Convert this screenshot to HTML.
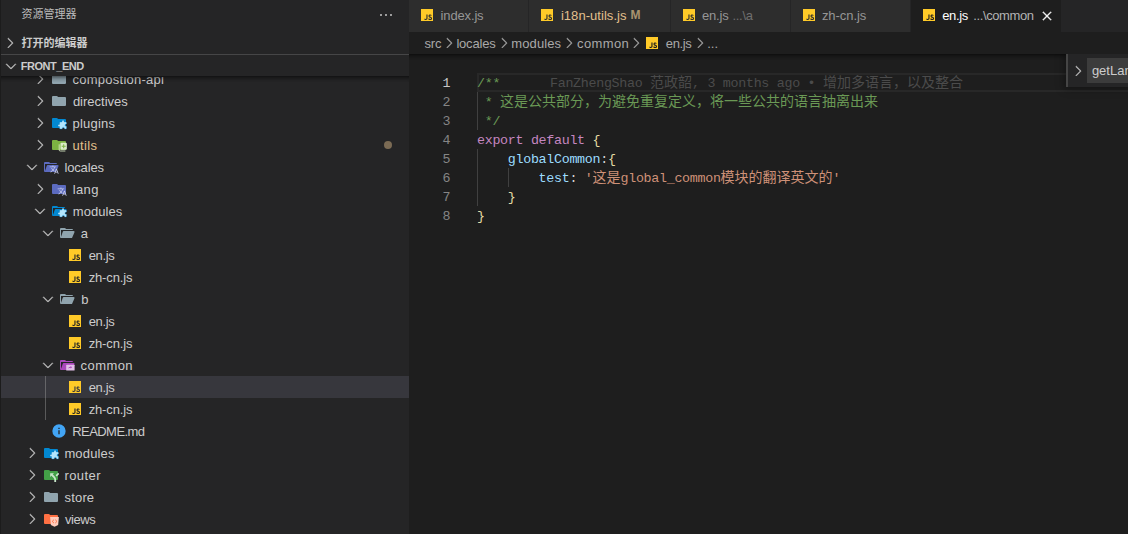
<!DOCTYPE html>
<html lang="zh-CN">
<head>
<meta charset="utf-8">
<title>en.js - front_end - Visual Studio Code</title>
<style>
html,body{margin:0;padding:0;background:#1e1e1e;}
body{width:1128px;height:534px;overflow:hidden;position:relative;font-family:"Liberation Sans",sans-serif;}
.abs{position:absolute;display:block}
.lbl{white-space:pre}
.ui13{font-size:13px}
.ui11b{font-size:11px;font-weight:bold}
svg.ic{display:block}
#sidebar{position:absolute;left:0;top:0;width:409px;height:534px;background:#252526;overflow:hidden}
.edge{position:absolute;left:0;top:0;width:1px;height:534px;background:#1c1c1c;z-index:5}
.sb-title{position:absolute;left:0;top:0;width:409px;height:32px}
.pane-h{position:absolute;left:0;width:409px;height:21px;z-index:3;background:#252526}
.pane-border{position:absolute;left:0;width:409px;height:1px;background:#464647;z-index:3}
#tree{position:absolute;left:0;width:409px;bottom:0;overflow:hidden}
.row{position:absolute;left:0;width:409px;height:22px}
.row.sel{background:#37373d}
.dot{width:8.800px;height:8.800px;border-radius:50%;background:#7b6b54}
.guide{position:absolute;width:1px;background:rgba(170,170,170,.4)}
.tree-shadow{position:absolute;left:0;top:0;width:409px;height:6px;box-shadow:#000 0 6px 6px -6px inset}
#editor{position:absolute;left:409px;top:0;width:719px;height:534px;background:#1e1e1e;overflow:hidden}
#tabs{position:absolute;left:0;top:0;width:719px;height:32px;background:#252526}
.tab{position:absolute;top:0;height:32px;background:#2d2d2d;margin-left:-409px}
.tab.act{background:#1e1e1e}
#crumbs{position:absolute;left:0;top:32px;width:719px;height:22px;background:#1e1e1e}
#edclip{position:absolute;left:0;top:54px;width:719px;height:480px;overflow:hidden}
#code{position:absolute;left:0;top:0;width:719px;height:480px;font-family:"Liberation Mono",monospace;font-size:13.3333px;letter-spacing:-0.300px}
.curline{position:absolute;left:68px;top:19px;width:700px;height:15px;border:2px solid #282828}
.iguide{position:absolute;width:1px;background:#404040}
.ln{position:absolute;left:0;width:41.300px;height:19px;line-height:19px;padding-top:1px;text-align:right;color:#858585;white-space:pre}
.ln.act{color:#c6c6c6}
.cl{position:absolute;left:68px;height:19px;line-height:19px;padding-top:1px;white-space:pre;color:#d4d4d4}
.blame{margin-left:49.900px}
.cjkui{position:absolute;white-space:pre;font-family:"Liberation Sans","Noto Sans CJK SC",sans-serif;font-size:11px;line-height:11px}
.cjkt{font-family:"Liberation Mono","Noto Sans CJK SC",monospace;font-size:14px;letter-spacing:0}
.ed-shadow{position:absolute;left:0;top:0;width:719px;height:6px;box-shadow:#000 0 6px 6px -6px inset}
#find{position:absolute;left:657px;top:0;width:62px;height:33px;background:#252526;box-shadow:0 0 8px 2px rgba(0,0,0,.36)}
#find .sash{position:absolute;left:0;top:0;width:2px;height:33px;background:#454545}
#find .inp{position:absolute;left:21px;top:4px;width:41px;height:25px;background:#3c3c3c;overflow:hidden}
</style>
</head>
<body>
<div id="sidebar">
<div class="edge"></div>
<div class="sb-title"><span class="cjkui" style="left:21.400px;top:9.300px;color:#bbbbbb">资源管理器</span><svg class="abs" style="left:378px;top:7px" width="16" height="16" viewBox="0 0 16 16"><path fill="#c5c5c5" d="M4 8a1 1 0 1 1-2 0 1 1 0 0 1 2 0zm5 0a1 1 0 1 1-2 0 1 1 0 0 1 2 0zm5 0a1 1 0 1 1-2 0 1 1 0 0 1 2 0z"/></svg></div>
<div class="pane-h" style="top:32px"><span class="abs" style="left:2.300px;top:3px"><svg class="ic" width="16" height="16" viewBox="0 0 16 16"><path fill="#c5c5c5" stroke="#c5c5c5" stroke-width=".35" d="M10.072 8.024L5.715 3.667l.618-.62L11 7.716v.618L6.333 13l-.618-.619 4.357-4.357z"/></svg></span><span class="cjkui" style="left:21.400px;top:5.600px;color:#cccccc;font-weight:bold">打开的编辑器</span></div>
<div class="pane-border" style="top:54px"></div>
<div class="pane-h" style="top:55px"><span class="abs" style="left:2.800px;top:3px"><svg class="ic" width="16" height="16" viewBox="0 0 16 16"><path fill="#c5c5c5" stroke="#c5c5c5" stroke-width=".35" d="M7.976 10.072l4.357-4.357.62.618L8.284 11h-.618L3 6.333l.619-.618 4.357 4.357z"/></svg></span><span class="abs lbl ui11b" style="color:#cccccc;top:0;line-height:22px;left:20.7px;letter-spacing:-0.45px">FRONT_END</span></div>
<div id="tree" style="top:76px">
<div class="row" style="top:-8px"><span class="abs" style="left:31.5px;top:3px"><svg class="ic" width="16" height="16" viewBox="0 0 16 16"><path fill="#c5c5c5" stroke="#c5c5c5" stroke-width=".35" d="M10.072 8.024L5.715 3.667l.618-.62L11 7.716v.618L6.333 13l-.618-.619 4.357-4.357z"/></svg></span><span class="abs" style="left:51px;top:3px"><svg class="ic" width="16" height="16" viewBox="0 0 32 32"><path fill="#90a4ae" d="m13.844 7.536-1.288-1.072A2 2 0 0 0 11.276 6H4a2 2 0 0 0-2 2v16a2 2 0 0 0 2 2h24a2 2 0 0 0 2-2V10a2 2 0 0 0-2-2H15.124a2 2 0 0 1-1.28-.464"/></svg></span><span class="abs lbl ui13" style="color:#cccccc;top:1px;line-height:22px;left:72.5px;letter-spacing:0.25px">compostion-api</span></div>
<div class="row" style="top:14px"><span class="abs" style="left:31.5px;top:3px"><svg class="ic" width="16" height="16" viewBox="0 0 16 16"><path fill="#c5c5c5" stroke="#c5c5c5" stroke-width=".35" d="M10.072 8.024L5.715 3.667l.618-.62L11 7.716v.618L6.333 13l-.618-.619 4.357-4.357z"/></svg></span><span class="abs" style="left:51px;top:3px"><svg class="ic" width="16" height="16" viewBox="0 0 32 32"><path fill="#90a4ae" d="m13.844 7.536-1.288-1.072A2 2 0 0 0 11.276 6H4a2 2 0 0 0-2 2v16a2 2 0 0 0 2 2h24a2 2 0 0 0 2-2V10a2 2 0 0 0-2-2H15.124a2 2 0 0 1-1.28-.464"/></svg></span><span class="abs lbl ui13" style="color:#cccccc;top:1px;line-height:22px;left:72.9px;letter-spacing:0px">directives</span></div>
<div class="row" style="top:36px"><span class="abs" style="left:31.5px;top:3px"><svg class="ic" width="16" height="16" viewBox="0 0 16 16"><path fill="#c5c5c5" stroke="#c5c5c5" stroke-width=".35" d="M10.072 8.024L5.715 3.667l.618-.62L11 7.716v.618L6.333 13l-.618-.619 4.357-4.357z"/></svg></span><span class="abs" style="left:51px;top:3px"><svg class="ic" width="16" height="16" viewBox="0 0 32 32"><path fill="#0288d1" d="m13.844 7.536-1.288-1.072A2 2 0 0 0 11.276 6H4a2 2 0 0 0-2 2v16a2 2 0 0 0 2 2h24a2 2 0 0 0 2-2V10a2 2 0 0 0-2-2H15.124a2 2 0 0 1-1.28-.464"/><path fill="#b3e5fc" stroke="#0277bd" stroke-width=".6" transform="matrix(-1.090 0 0 1.090 48.680 -2.480)" d="M30 19.500h-1v-3c0-.83-.67-1.500-1.500-1.500h-3v-1a2 2 0 0 0-4 0v1h-3c-.83 0-1.500.67-1.500 1.500V19h1a2 2 0 0 1 0 4h-1v3.500c0 .83.67 1.500 1.500 1.500H20v-1a2 2 0 0 1 4 0v1h3.500c.83 0 1.500-.67 1.500-1.500v-3h1a2 2 0 0 0 0-4z"/></svg></span><span class="abs lbl ui13" style="color:#cccccc;top:1px;line-height:22px;left:72.6px;letter-spacing:0.2px">plugins</span></div>
<div class="row" style="top:58px"><span class="abs" style="left:31.5px;top:3px"><svg class="ic" width="16" height="16" viewBox="0 0 16 16"><path fill="#c5c5c5" stroke="#c5c5c5" stroke-width=".35" d="M10.072 8.024L5.715 3.667l.618-.62L11 7.716v.618L6.333 13l-.618-.619 4.357-4.357z"/></svg></span><span class="abs" style="left:51px;top:3px"><svg class="ic" width="16" height="16" viewBox="0 0 32 32"><path fill="#7cb342" d="m13.844 7.536-1.288-1.072A2 2 0 0 0 11.276 6H4a2 2 0 0 0-2 2v16a2 2 0 0 0 2 2h24a2 2 0 0 0 2-2V10a2 2 0 0 0-2-2H15.124a2 2 0 0 1-1.28-.464"/><path fill="none" stroke="#dcedc8" stroke-width="1.700" stroke-linecap="round" stroke-linejoin="round" d="M16.400 15.500V26a2 2 0 0 0 2 2H28"/><rect x="19" y="11.300" width="12.700" height="14.400" rx="2.200" fill="#dcedc8"/><path fill="#7cb342" d="M24.400 14.600h2v3h3v2h-3v3h-2v-3h-3v-2h3z"/></svg></span><span class="abs lbl ui13" style="color:#e2c08d;top:1px;line-height:22px;left:72.6px;letter-spacing:0.3px">utils</span><span class="abs dot" style="left:383.600px;top:6.600px"></span></div>
<div class="row" style="top:80px"><span class="abs" style="left:23.8px;top:3px"><svg class="ic" width="16" height="16" viewBox="0 0 16 16"><path fill="#c5c5c5" stroke="#c5c5c5" stroke-width=".35" d="M7.976 10.072l4.357-4.357.62.618L8.284 11h-.618L3 6.333l.619-.618 4.357 4.357z"/></svg></span><span class="abs" style="left:43px;top:3px"><svg class="ic" width="16" height="16" viewBox="0 0 32 32"><path fill="#5c6bc0" d="M28.967 12H9.442a2 2 0 0 0-1.898 1.368L4 24V10h24a2 2 0 0 0-2-2H15.124a2 2 0 0 1-1.28-.464l-1.288-1.072A2 2 0 0 0 11.276 6H4a2 2 0 0 0-2 2v16a2 2 0 0 0 2 2h22l4.805-11.212A2 2 0 0 0 28.967 12"/><g fill="#c5cae9" transform="translate(12.500 11.500) scale(.82)"><path d="M12.870 15.070l-2.540-2.510.03-.03A17.520 17.520 0 0 0 14.070 6H17V4h-7V2H8v2H1v2h11.170C11.500 7.920 10.440 9.750 9 11.350 8.070 10.320 7.300 9.190 6.690 8h-2c.73 1.630 1.730 3.170 2.980 4.560l-5.090 5.020L4 19l5-5 3.110 3.110.76-2.040M18.500 10h-2L12 22h2l1.120-3h4.750L21 22h2l-4.500-12m-2.620 7l1.620-4.330L19.120 17h-3.240z"/></g></svg></span><span class="abs lbl ui13" style="color:#cccccc;top:1px;line-height:22px;left:64.4px;letter-spacing:-0.15px">locales</span></div>
<div class="row" style="top:102px"><span class="abs" style="left:31.5px;top:3px"><svg class="ic" width="16" height="16" viewBox="0 0 16 16"><path fill="#c5c5c5" stroke="#c5c5c5" stroke-width=".35" d="M10.072 8.024L5.715 3.667l.618-.62L11 7.716v.618L6.333 13l-.618-.619 4.357-4.357z"/></svg></span><span class="abs" style="left:51px;top:3px"><svg class="ic" width="16" height="16" viewBox="0 0 32 32"><path fill="#5c6bc0" d="m13.844 7.536-1.288-1.072A2 2 0 0 0 11.276 6H4a2 2 0 0 0-2 2v16a2 2 0 0 0 2 2h24a2 2 0 0 0 2-2V10a2 2 0 0 0-2-2H15.124a2 2 0 0 1-1.28-.464"/><g fill="#c5cae9" transform="translate(12.500 11.500) scale(.82)"><path d="M12.870 15.070l-2.540-2.510.03-.03A17.520 17.520 0 0 0 14.070 6H17V4h-7V2H8v2H1v2h11.170C11.500 7.920 10.440 9.750 9 11.350 8.070 10.320 7.300 9.190 6.690 8h-2c.73 1.630 1.730 3.170 2.980 4.560l-5.090 5.020L4 19l5-5 3.110 3.110.76-2.040M18.500 10h-2L12 22h2l1.120-3h4.750L21 22h2l-4.500-12m-2.620 7l1.620-4.330L19.120 17h-3.240z"/></g></svg></span><span class="abs lbl ui13" style="color:#cccccc;top:1px;line-height:22px;left:72.8px;letter-spacing:0.35px">lang</span></div>
<div class="row" style="top:124px"><span class="abs" style="left:31.8px;top:3px"><svg class="ic" width="16" height="16" viewBox="0 0 16 16"><path fill="#c5c5c5" stroke="#c5c5c5" stroke-width=".35" d="M7.976 10.072l4.357-4.357.62.618L8.284 11h-.618L3 6.333l.619-.618 4.357 4.357z"/></svg></span><span class="abs" style="left:51px;top:3px"><svg class="ic" width="16" height="16" viewBox="0 0 32 32"><path fill="#0288d1" d="M28.967 12H9.442a2 2 0 0 0-1.898 1.368L4 24V10h24a2 2 0 0 0-2-2H15.124a2 2 0 0 1-1.28-.464l-1.288-1.072A2 2 0 0 0 11.276 6H4a2 2 0 0 0-2 2v16a2 2 0 0 0 2 2h22l4.805-11.212A2 2 0 0 0 28.967 12"/><path fill="#b3e5fc" stroke="#0277bd" stroke-width=".6" transform="matrix(-1.090 0 0 1.090 48.680 -2.480)" d="M30 19.500h-1v-3c0-.83-.67-1.500-1.500-1.500h-3v-1a2 2 0 0 0-4 0v1h-3c-.83 0-1.500.67-1.500 1.500V19h1a2 2 0 0 1 0 4h-1v3.500c0 .83.67 1.500 1.500 1.500H20v-1a2 2 0 0 1 4 0v1h3.500c.83 0 1.500-.67 1.500-1.500v-3h1a2 2 0 0 0 0-4z"/></svg></span><span class="abs lbl ui13" style="color:#cccccc;top:1px;line-height:22px;left:72.8px;letter-spacing:0.05px">modules</span></div>
<div class="row" style="top:146px"><span class="abs" style="left:39.8px;top:3px"><svg class="ic" width="16" height="16" viewBox="0 0 16 16"><path fill="#c5c5c5" stroke="#c5c5c5" stroke-width=".35" d="M7.976 10.072l4.357-4.357.62.618L8.284 11h-.618L3 6.333l.619-.618 4.357 4.357z"/></svg></span><span class="abs" style="left:59px;top:3px"><svg class="ic" width="16" height="16" viewBox="0 0 32 32"><path fill="#90a4ae" d="M28.967 12H9.442a2 2 0 0 0-1.898 1.368L4 24V10h24a2 2 0 0 0-2-2H15.124a2 2 0 0 1-1.28-.464l-1.288-1.072A2 2 0 0 0 11.276 6H4a2 2 0 0 0-2 2v16a2 2 0 0 0 2 2h22l4.805-11.212A2 2 0 0 0 28.967 12"/></svg></span><span class="abs lbl ui13" style="color:#cccccc;top:1px;line-height:22px;left:80.8px;letter-spacing:0px">a</span></div>
<div class="row" style="top:168px"><span class="abs" style="left:67px;top:3px"><svg class="ic" width="16" height="16" viewBox="0 0 24 24"><path fill="#ffca28" d="M3 3h18v18H3V3m4.73 15.04c.4.85 1.19 1.55 2.54 1.55 1.5 0 2.53-.8 2.53-2.55v-5.78h-1.7V17c0 .86-.35 1.08-.9 1.08-.58 0-.82-.4-1.09-.87l-1.38.83m5.98-.18c.5.98 1.51 1.73 3.09 1.73 1.6 0 2.8-.83 2.8-2.36 0-1.41-.81-2.04-2.25-2.66l-.42-.18c-.73-.31-1.04-.52-1.04-1.02 0-.41.31-.73.81-.73.48 0 .8.21 1.09.73l1.31-.87c-.55-.96-1.33-1.33-2.4-1.33-1.51 0-2.48.96-2.48 2.23 0 1.38.81 2.03 2.03 2.55l.42.18c.78.34 1.24.55 1.24 1.13 0 .48-.45.83-1.15.83-.83 0-1.31-.43-1.67-1.03l-1.38.8z"/></svg></span><span class="abs lbl ui13" style="color:#cccccc;top:1px;line-height:22px;left:88.7px;letter-spacing:-0.35px">en.js</span></div>
<div class="row" style="top:190px"><span class="abs" style="left:67px;top:3px"><svg class="ic" width="16" height="16" viewBox="0 0 24 24"><path fill="#ffca28" d="M3 3h18v18H3V3m4.73 15.04c.4.85 1.19 1.55 2.54 1.55 1.5 0 2.53-.8 2.53-2.55v-5.78h-1.7V17c0 .86-.35 1.08-.9 1.08-.58 0-.82-.4-1.09-.87l-1.38.83m5.98-.18c.5.98 1.51 1.73 3.09 1.73 1.6 0 2.8-.83 2.8-2.36 0-1.41-.81-2.04-2.25-2.66l-.42-.18c-.73-.31-1.04-.52-1.04-1.02 0-.41.31-.73.81-.73.48 0 .8.21 1.09.73l1.31-.87c-.55-.96-1.33-1.33-2.4-1.33-1.51 0-2.48.96-2.48 2.23 0 1.38.81 2.03 2.03 2.55l.42.18c.78.34 1.24.55 1.24 1.13 0 .48-.45.83-1.15.83-.83 0-1.31-.43-1.67-1.03l-1.38.8z"/></svg></span><span class="abs lbl ui13" style="color:#cccccc;top:1px;line-height:22px;left:88.7px;letter-spacing:-0.15px">zh-cn.js</span></div>
<div class="row" style="top:212px"><span class="abs" style="left:39.8px;top:3px"><svg class="ic" width="16" height="16" viewBox="0 0 16 16"><path fill="#c5c5c5" stroke="#c5c5c5" stroke-width=".35" d="M7.976 10.072l4.357-4.357.62.618L8.284 11h-.618L3 6.333l.619-.618 4.357 4.357z"/></svg></span><span class="abs" style="left:59px;top:3px"><svg class="ic" width="16" height="16" viewBox="0 0 32 32"><path fill="#90a4ae" d="M28.967 12H9.442a2 2 0 0 0-1.898 1.368L4 24V10h24a2 2 0 0 0-2-2H15.124a2 2 0 0 1-1.28-.464l-1.288-1.072A2 2 0 0 0 11.276 6H4a2 2 0 0 0-2 2v16a2 2 0 0 0 2 2h22l4.805-11.212A2 2 0 0 0 28.967 12"/></svg></span><span class="abs lbl ui13" style="color:#cccccc;top:1px;line-height:22px;left:81.2px;letter-spacing:0px">b</span></div>
<div class="row" style="top:234px"><span class="abs" style="left:67px;top:3px"><svg class="ic" width="16" height="16" viewBox="0 0 24 24"><path fill="#ffca28" d="M3 3h18v18H3V3m4.73 15.04c.4.85 1.19 1.55 2.54 1.55 1.5 0 2.53-.8 2.53-2.55v-5.78h-1.7V17c0 .86-.35 1.08-.9 1.08-.58 0-.82-.4-1.09-.87l-1.38.83m5.98-.18c.5.98 1.51 1.73 3.09 1.73 1.6 0 2.8-.83 2.8-2.36 0-1.41-.81-2.04-2.25-2.66l-.42-.18c-.73-.31-1.04-.52-1.04-1.02 0-.41.31-.73.81-.73.48 0 .8.21 1.09.73l1.31-.87c-.55-.96-1.33-1.33-2.4-1.33-1.51 0-2.48.96-2.48 2.23 0 1.38.81 2.03 2.03 2.55l.42.18c.78.34 1.24.55 1.24 1.13 0 .48-.45.83-1.15.83-.83 0-1.31-.43-1.67-1.03l-1.38.8z"/></svg></span><span class="abs lbl ui13" style="color:#cccccc;top:1px;line-height:22px;left:88.7px;letter-spacing:-0.35px">en.js</span></div>
<div class="row" style="top:256px"><span class="abs" style="left:67px;top:3px"><svg class="ic" width="16" height="16" viewBox="0 0 24 24"><path fill="#ffca28" d="M3 3h18v18H3V3m4.73 15.04c.4.85 1.19 1.55 2.54 1.55 1.5 0 2.53-.8 2.53-2.55v-5.78h-1.7V17c0 .86-.35 1.08-.9 1.08-.58 0-.82-.4-1.09-.87l-1.38.83m5.98-.18c.5.98 1.51 1.73 3.09 1.73 1.6 0 2.8-.83 2.8-2.36 0-1.41-.81-2.04-2.25-2.66l-.42-.18c-.73-.31-1.04-.52-1.04-1.02 0-.41.31-.73.81-.73.48 0 .8.21 1.09.73l1.31-.87c-.55-.96-1.33-1.33-2.4-1.33-1.51 0-2.48.96-2.48 2.23 0 1.38.81 2.03 2.03 2.55l.42.18c.78.34 1.24.55 1.24 1.13 0 .48-.45.83-1.15.83-.83 0-1.31-.43-1.67-1.03l-1.38.8z"/></svg></span><span class="abs lbl ui13" style="color:#cccccc;top:1px;line-height:22px;left:88.7px;letter-spacing:-0.15px">zh-cn.js</span></div>
<div class="row" style="top:278px"><span class="abs" style="left:39.8px;top:3px"><svg class="ic" width="16" height="16" viewBox="0 0 16 16"><path fill="#c5c5c5" stroke="#c5c5c5" stroke-width=".35" d="M7.976 10.072l4.357-4.357.62.618L8.284 11h-.618L3 6.333l.619-.618 4.357 4.357z"/></svg></span><span class="abs" style="left:59px;top:3px"><svg class="ic" width="16" height="16" viewBox="0 0 32 32"><path fill="#ab47bc" d="M28.967 12H9.442a2 2 0 0 0-1.898 1.368L4 24V10h24a2 2 0 0 0-2-2H15.124a2 2 0 0 1-1.28-.464l-1.288-1.072A2 2 0 0 0 11.276 6H4a2 2 0 0 0-2 2v16a2 2 0 0 0 2 2h22l4.805-11.212A2 2 0 0 0 28.967 12"/><rect x="14.400" y="15.400" width="16.800" height="11.800" rx="1.200" fill="#e1bee7"/><path fill="#ab47bc" d="M23.200 18.200l3 2.300-3 2.300v-1.500c-2.200 0-3.600.5-4.700 1.700.4-2.100 1.700-3.400 4.700-3.700z"/></svg></span><span class="abs lbl ui13" style="color:#cccccc;top:1px;line-height:22px;left:80.5px;letter-spacing:0.45px">common</span></div>
<div class="row sel" style="top:300px"><span class="abs" style="left:67px;top:3px"><svg class="ic" width="16" height="16" viewBox="0 0 24 24"><path fill="#ffca28" d="M3 3h18v18H3V3m4.73 15.04c.4.85 1.19 1.55 2.54 1.55 1.5 0 2.53-.8 2.53-2.55v-5.78h-1.7V17c0 .86-.35 1.08-.9 1.08-.58 0-.82-.4-1.09-.87l-1.38.83m5.98-.18c.5.98 1.51 1.73 3.09 1.73 1.6 0 2.8-.83 2.8-2.36 0-1.41-.81-2.04-2.25-2.66l-.42-.18c-.73-.31-1.04-.52-1.04-1.02 0-.41.31-.73.81-.73.48 0 .8.21 1.09.73l1.31-.87c-.55-.96-1.33-1.33-2.4-1.33-1.51 0-2.48.96-2.48 2.23 0 1.38.81 2.03 2.03 2.55l.42.18c.78.34 1.24.55 1.24 1.13 0 .48-.45.83-1.15.83-.83 0-1.31-.43-1.67-1.03l-1.38.8z"/></svg></span><span class="abs lbl ui13" style="color:#cccccc;top:1px;line-height:22px;left:88.7px;letter-spacing:-0.35px">en.js</span></div>
<div class="row" style="top:322px"><span class="abs" style="left:67px;top:3px"><svg class="ic" width="16" height="16" viewBox="0 0 24 24"><path fill="#ffca28" d="M3 3h18v18H3V3m4.73 15.04c.4.85 1.19 1.55 2.54 1.55 1.5 0 2.53-.8 2.53-2.55v-5.78h-1.7V17c0 .86-.35 1.08-.9 1.08-.58 0-.82-.4-1.09-.87l-1.38.83m5.98-.18c.5.98 1.51 1.73 3.09 1.73 1.6 0 2.8-.83 2.8-2.36 0-1.41-.81-2.04-2.25-2.66l-.42-.18c-.73-.31-1.04-.52-1.04-1.02 0-.41.31-.73.81-.73.48 0 .8.21 1.09.73l1.31-.87c-.55-.96-1.33-1.33-2.4-1.33-1.51 0-2.48.96-2.48 2.23 0 1.38.81 2.03 2.03 2.55l.42.18c.78.34 1.24.55 1.24 1.13 0 .48-.45.83-1.15.83-.83 0-1.31-.43-1.67-1.03l-1.38.8z"/></svg></span><span class="abs lbl ui13" style="color:#cccccc;top:1px;line-height:22px;left:88.7px;letter-spacing:-0.15px">zh-cn.js</span></div>
<div class="row" style="top:344px"><span class="abs" style="left:51px;top:3px"><svg class="ic" width="16" height="16" viewBox="0 0 24 24"><path fill="#42a5f5" d="M13 9h-2V7h2m0 10h-2v-6h2m-1-9A10 10 0 0 0 2 12a10 10 0 0 0 10 10 10 10 0 0 0 10-10A10 10 0 0 0 12 2z"/></svg></span><span class="abs lbl ui13" style="color:#cccccc;top:1px;line-height:22px;left:72.2px;letter-spacing:-0.55px">README.md</span></div>
<div class="row" style="top:366px"><span class="abs" style="left:23.5px;top:3px"><svg class="ic" width="16" height="16" viewBox="0 0 16 16"><path fill="#c5c5c5" stroke="#c5c5c5" stroke-width=".35" d="M10.072 8.024L5.715 3.667l.618-.62L11 7.716v.618L6.333 13l-.618-.619 4.357-4.357z"/></svg></span><span class="abs" style="left:43px;top:3px"><svg class="ic" width="16" height="16" viewBox="0 0 32 32"><path fill="#0288d1" d="m13.844 7.536-1.288-1.072A2 2 0 0 0 11.276 6H4a2 2 0 0 0-2 2v16a2 2 0 0 0 2 2h24a2 2 0 0 0 2-2V10a2 2 0 0 0-2-2H15.124a2 2 0 0 1-1.28-.464"/><path fill="#b3e5fc" stroke="#0277bd" stroke-width=".6" transform="matrix(-1.090 0 0 1.090 48.680 -2.480)" d="M30 19.500h-1v-3c0-.83-.67-1.500-1.500-1.500h-3v-1a2 2 0 0 0-4 0v1h-3c-.83 0-1.500.67-1.500 1.500V19h1a2 2 0 0 1 0 4h-1v3.500c0 .83.67 1.500 1.500 1.500H20v-1a2 2 0 0 1 4 0v1h3.500c.83 0 1.500-.67 1.500-1.500v-3h1a2 2 0 0 0 0-4z"/></svg></span><span class="abs lbl ui13" style="color:#cccccc;top:1px;line-height:22px;left:64.4px;letter-spacing:0.15px">modules</span></div>
<div class="row" style="top:388px"><span class="abs" style="left:23.5px;top:3px"><svg class="ic" width="16" height="16" viewBox="0 0 16 16"><path fill="#c5c5c5" stroke="#c5c5c5" stroke-width=".35" d="M10.072 8.024L5.715 3.667l.618-.62L11 7.716v.618L6.333 13l-.618-.619 4.357-4.357z"/></svg></span><span class="abs" style="left:43px;top:3px"><svg class="ic" width="16" height="16" viewBox="0 0 32 32"><path fill="#43a047" d="m13.844 7.536-1.288-1.072A2 2 0 0 0 11.276 6H4a2 2 0 0 0-2 2v16a2 2 0 0 0 2 2h24a2 2 0 0 0 2-2V10a2 2 0 0 0-2-2H15.124a2 2 0 0 1-1.28-.464"/><path fill="#c8e6c9" d="M14.400 12.400h7.600l-7.600 7.600z"/><path fill="none" stroke="#c8e6c9" stroke-width="3.600" d="M17.500 15.500l4.700 4.700q2.200 2.200 2.200 5v4.600"/><path fill="none" stroke="#c8e6c9" stroke-width="3.400" stroke-linecap="round" d="M27.400 16.800l2.900-2.900"/></svg></span><span class="abs lbl ui13" style="color:#cccccc;top:1px;line-height:22px;left:64.4px;letter-spacing:0.45px">router</span></div>
<div class="row" style="top:410px"><span class="abs" style="left:23.5px;top:3px"><svg class="ic" width="16" height="16" viewBox="0 0 16 16"><path fill="#c5c5c5" stroke="#c5c5c5" stroke-width=".35" d="M10.072 8.024L5.715 3.667l.618-.62L11 7.716v.618L6.333 13l-.618-.619 4.357-4.357z"/></svg></span><span class="abs" style="left:43px;top:3px"><svg class="ic" width="16" height="16" viewBox="0 0 32 32"><path fill="#90a4ae" d="m13.844 7.536-1.288-1.072A2 2 0 0 0 11.276 6H4a2 2 0 0 0-2 2v16a2 2 0 0 0 2 2h24a2 2 0 0 0 2-2V10a2 2 0 0 0-2-2H15.124a2 2 0 0 1-1.28-.464"/></svg></span><span class="abs lbl ui13" style="color:#cccccc;top:1px;line-height:22px;left:64.6px;letter-spacing:0.15px">store</span></div>
<div class="row" style="top:432px"><span class="abs" style="left:23.5px;top:3px"><svg class="ic" width="16" height="16" viewBox="0 0 16 16"><path fill="#c5c5c5" stroke="#c5c5c5" stroke-width=".35" d="M10.072 8.024L5.715 3.667l.618-.62L11 7.716v.618L6.333 13l-.618-.619 4.357-4.357z"/></svg></span><span class="abs" style="left:43px;top:3px"><svg class="ic" width="16" height="16" viewBox="0 0 32 32"><path fill="#ff7043" d="m13.844 7.536-1.288-1.072A2 2 0 0 0 11.276 6H4a2 2 0 0 0-2 2v16a2 2 0 0 0 2 2h24a2 2 0 0 0 2-2V10a2 2 0 0 0-2-2H15.124a2 2 0 0 1-1.28-.464"/><path fill="#ffccbc" d="M14.200 11.800h17.600l-1.500 16-7.300 3.600-7.300-3.600z"/><path fill="none" stroke="#ff7043" stroke-width="1.900" d="M21.900 17.500l-3.500 3.300 3.500 3.300M24.500 17.500l3.500 3.300-3.500 3.300"/></svg></span><span class="abs lbl ui13" style="color:#cccccc;top:1px;line-height:22px;left:64.9px;letter-spacing:-0.4px">views</span></div>
<div class="guide" style="left:45px;top:300px;height:44px"></div>
<div class="tree-shadow"></div>
</div>
</div>
<div id="editor">
<div id="tabs">
<div class="tab" style="left:409px;width:119px"><span class="abs" style="left:10px;top:7px"><svg class="ic" width="16" height="16" viewBox="0 0 24 24"><path fill="#ffca28" d="M3 3h18v18H3V3m4.73 15.04c.4.85 1.19 1.55 2.54 1.55 1.5 0 2.53-.8 2.53-2.55v-5.78h-1.7V17c0 .86-.35 1.08-.9 1.08-.58 0-.82-.4-1.09-.87l-1.38.83m5.98-.18c.5.98 1.51 1.73 3.09 1.73 1.6 0 2.8-.83 2.8-2.36 0-1.41-.81-2.04-2.25-2.66l-.42-.18c-.73-.31-1.04-.52-1.04-1.02 0-.41.31-.73.81-.73.48 0 .8.21 1.09.73l1.31-.87c-.55-.96-1.33-1.33-2.4-1.33-1.51 0-2.48.96-2.48 2.23 0 1.38.81 2.03 2.03 2.55l.42.18c.78.34 1.24.55 1.24 1.13 0 .48-.45.83-1.15.83-.83 0-1.31-.43-1.67-1.03l-1.38.8z"/></svg></span><span class="abs lbl ui13" style="color:#969696;top:0px;line-height:32px;left:31.6px;letter-spacing:-0.15px">index.js</span></div>
<div class="tab" style="left:529px;width:141px"><span class="abs" style="left:10px;top:7px"><svg class="ic" width="16" height="16" viewBox="0 0 24 24"><path fill="#ffca28" d="M3 3h18v18H3V3m4.73 15.04c.4.85 1.19 1.55 2.54 1.55 1.5 0 2.53-.8 2.53-2.55v-5.78h-1.7V17c0 .86-.35 1.08-.9 1.08-.58 0-.82-.4-1.09-.87l-1.38.83m5.98-.18c.5.98 1.51 1.73 3.09 1.73 1.6 0 2.8-.83 2.8-2.36 0-1.41-.81-2.04-2.25-2.66l-.42-.18c-.73-.31-1.04-.52-1.04-1.02 0-.41.31-.73.81-.73.48 0 .8.21 1.09.73l1.31-.87c-.55-.96-1.33-1.33-2.4-1.33-1.51 0-2.48.96-2.48 2.23 0 1.38.81 2.03 2.03 2.55l.42.18c.78.34 1.24.55 1.24 1.13 0 .48-.45.83-1.15.83-.83 0-1.31-.43-1.67-1.03l-1.38.8z"/></svg></span><span class="abs lbl ui13" style="color:#e2c08d;top:0px;line-height:32px;left:31.9px;letter-spacing:0.05px">i18n-utils.js</span><span class="abs lbl ui13" style="color:#a8936f;top:-1.4px;line-height:32px;font-size:12px;font-weight:bold;left:101.5px;letter-spacing:0px">M</span></div>
<div class="tab" style="left:671px;width:119px"><span class="abs" style="left:10px;top:7px"><svg class="ic" width="16" height="16" viewBox="0 0 24 24"><path fill="#ffca28" d="M3 3h18v18H3V3m4.73 15.04c.4.85 1.19 1.55 2.54 1.55 1.5 0 2.53-.8 2.53-2.55v-5.78h-1.7V17c0 .86-.35 1.08-.9 1.08-.58 0-.82-.4-1.09-.87l-1.38.83m5.98-.18c.5.98 1.51 1.73 3.09 1.73 1.6 0 2.8-.83 2.8-2.36 0-1.41-.81-2.04-2.25-2.66l-.42-.18c-.73-.31-1.04-.52-1.04-1.02 0-.41.31-.73.81-.73.48 0 .8.21 1.09.73l1.31-.87c-.55-.96-1.33-1.33-2.4-1.33-1.51 0-2.48.96-2.48 2.23 0 1.38.81 2.03 2.03 2.55l.42.18c.78.34 1.24.55 1.24 1.13 0 .48-.45.83-1.15.83-.83 0-1.31-.43-1.67-1.03l-1.38.8z"/></svg></span><span class="abs lbl ui13" style="color:#969696;top:0px;line-height:32px;left:31px;letter-spacing:-0.2px">en.js</span><span class="abs lbl ui13" style="color:#6f6f6f;top:0px;line-height:32px;left:61.4px;letter-spacing:-0.25px">...\a</span></div>
<div class="tab" style="left:791px;width:119px"><span class="abs" style="left:10px;top:7px"><svg class="ic" width="16" height="16" viewBox="0 0 24 24"><path fill="#ffca28" d="M3 3h18v18H3V3m4.73 15.04c.4.85 1.19 1.55 2.54 1.55 1.5 0 2.53-.8 2.53-2.55v-5.78h-1.7V17c0 .86-.35 1.08-.9 1.08-.58 0-.82-.4-1.09-.87l-1.38.83m5.98-.18c.5.98 1.51 1.73 3.09 1.73 1.6 0 2.8-.83 2.8-2.36 0-1.41-.81-2.04-2.25-2.66l-.42-.18c-.73-.31-1.04-.52-1.04-1.02 0-.41.31-.73.81-.73.48 0 .8.21 1.09.73l1.31-.87c-.55-.96-1.33-1.33-2.4-1.33-1.51 0-2.48.96-2.48 2.23 0 1.38.81 2.03 2.03 2.55l.42.18c.78.34 1.24.55 1.24 1.13 0 .48-.45.83-1.15.83-.83 0-1.31-.43-1.67-1.03l-1.38.8z"/></svg></span><span class="abs lbl ui13" style="color:#969696;top:0px;line-height:32px;left:30.9px;letter-spacing:-0.05px">zh-cn.js</span></div>
<div class="tab act" style="left:911px;width:150px"><span class="abs" style="left:10px;top:7px"><svg class="ic" width="16" height="16" viewBox="0 0 24 24"><path fill="#ffca28" d="M3 3h18v18H3V3m4.73 15.04c.4.85 1.19 1.55 2.54 1.55 1.5 0 2.53-.8 2.53-2.55v-5.78h-1.7V17c0 .86-.35 1.08-.9 1.08-.58 0-.82-.4-1.09-.87l-1.38.83m5.98-.18c.5.98 1.51 1.73 3.09 1.73 1.6 0 2.8-.83 2.8-2.36 0-1.41-.81-2.04-2.25-2.66l-.42-.18c-.73-.31-1.04-.52-1.04-1.02 0-.41.31-.73.81-.73.48 0 .8.21 1.09.73l1.31-.87c-.55-.96-1.33-1.33-2.4-1.33-1.51 0-2.48.96-2.48 2.23 0 1.38.81 2.03 2.03 2.55l.42.18c.78.34 1.24.55 1.24 1.13 0 .48-.45.83-1.15.83-.83 0-1.31-.43-1.67-1.03l-1.38.8z"/></svg></span><span class="abs lbl ui13" style="color:#ffffff;top:0px;line-height:32px;left:31.2px;letter-spacing:-0.35px">en.js</span><span class="abs lbl ui13" style="color:#b3b3b3;top:0px;line-height:32px;left:62.3px;letter-spacing:-0.4px">...\common</span><svg class="abs" style="left:127.9px;top:7.700px" width="16" height="16" viewBox="0 0 16 16"><path fill="#ffffff" stroke="#ffffff" stroke-width=".4" d="M8 8.707l3.646 3.647.708-.707L8.707 8l3.647-3.646-.707-.708L8 7.293 4.354 3.646l-.707.708L7.293 8l-3.646 3.646.707.708L8 8.707z"/></svg></div>
</div>
<div id="crumbs">
<span class="abs lbl ui13" style="color:#a9a9a9;top:1px;line-height:22px;left:15.4px;letter-spacing:-0.1px">src</span><span class="abs" style="left:32px;top:3px"><svg class="ic" width="16" height="16" viewBox="0 0 16 16"><path fill="#a9a9a9" stroke="#a9a9a9" stroke-width=".35" d="M10.072 8.024L5.715 3.667l.618-.62L11 7.716v.618L6.333 13l-.618-.619 4.357-4.357z"/></svg></span>
<span class="abs lbl ui13" style="color:#a9a9a9;top:1px;line-height:22px;left:47.4px;letter-spacing:-0.2px">locales</span><span class="abs" style="left:86.7px;top:3px"><svg class="ic" width="16" height="16" viewBox="0 0 16 16"><path fill="#a9a9a9" stroke="#a9a9a9" stroke-width=".35" d="M10.072 8.024L5.715 3.667l.618-.62L11 7.716v.618L6.333 13l-.618-.619 4.357-4.357z"/></svg></span>
<span class="abs lbl ui13" style="color:#a9a9a9;top:1px;line-height:22px;left:102.3px;letter-spacing:0.1px">modules</span><span class="abs" style="left:151.9px;top:3px"><svg class="ic" width="16" height="16" viewBox="0 0 16 16"><path fill="#a9a9a9" stroke="#a9a9a9" stroke-width=".35" d="M10.072 8.024L5.715 3.667l.618-.62L11 7.716v.618L6.333 13l-.618-.619 4.357-4.357z"/></svg></span>
<span class="abs lbl ui13" style="color:#a9a9a9;top:1px;line-height:22px;left:168.1px;letter-spacing:0.35px">common</span><span class="abs" style="left:219.3px;top:3px"><svg class="ic" width="16" height="16" viewBox="0 0 16 16"><path fill="#a9a9a9" stroke="#a9a9a9" stroke-width=".35" d="M10.072 8.024L5.715 3.667l.618-.62L11 7.716v.618L6.333 13l-.618-.619 4.357-4.357z"/></svg></span>
<span class="abs" style="left:235.2px;top:3px"><svg class="ic" width="16" height="16" viewBox="0 0 24 24"><path fill="#ffca28" d="M3 3h18v18H3V3m4.73 15.04c.4.85 1.19 1.55 2.54 1.55 1.5 0 2.53-.8 2.53-2.55v-5.78h-1.7V17c0 .86-.35 1.08-.9 1.08-.58 0-.82-.4-1.09-.87l-1.38.83m5.98-.18c.5.98 1.51 1.73 3.09 1.73 1.6 0 2.8-.83 2.8-2.36 0-1.41-.81-2.04-2.25-2.66l-.42-.18c-.73-.31-1.04-.52-1.04-1.02 0-.41.31-.73.81-.73.48 0 .8.21 1.09.73l1.31-.87c-.55-.96-1.33-1.33-2.4-1.33-1.51 0-2.48.96-2.48 2.23 0 1.38.81 2.03 2.03 2.55l.42.18c.78.34 1.24.55 1.24 1.13 0 .48-.45.83-1.15.83-.83 0-1.31-.43-1.67-1.03l-1.38.8z"/></svg></span>
<span class="abs lbl ui13" style="color:#a9a9a9;top:1px;line-height:22px;left:256.8px;letter-spacing:-0.35px">en.js</span><span class="abs" style="left:282.6px;top:3px"><svg class="ic" width="16" height="16" viewBox="0 0 16 16"><path fill="#a9a9a9" stroke="#a9a9a9" stroke-width=".35" d="M10.072 8.024L5.715 3.667l.618-.62L11 7.716v.618L6.333 13l-.618-.619 4.357-4.357z"/></svg></span>
<span class="abs lbl ui13" style="color:#a9a9a9;top:1px;line-height:22px;left:298.2px;letter-spacing:0.05px">...</span>
</div>
<div id="edclip">
<div id="code">
<div class="curline"></div>
<div class="iguide" style="left:68px;top:38px;height:38px"></div>
<div class="iguide" style="left:68px;top:95px;height:57px"></div>
<div class="iguide" style="left:99px;top:114px;height:19px"></div>
<div class="ln act" style="top:19px">1</div>
<div class="cl" style="top:19px"><span style="color:#6a9955">/**</span><span class="blame"><span style="color:#4b4b4b">FanZhengShao </span><span class="cjkt" style="color:#4b4b4b">范政韶</span><span style="color:#4b4b4b">, 3 months ago • </span><span class="cjkt" style="color:#4b4b4b">增加多语言，以及整合</span></span></div>
<div class="ln" style="top:38px">2</div>
<div class="cl" style="top:38px"><span style="color:#6a9955"> * </span><span class="cjkt" style="color:#6a9955">这是公共部分，为避免重复定义，将一些公共的语言抽离出来</span></div>
<div class="ln" style="top:57px">3</div>
<div class="cl" style="top:57px"><span style="color:#6a9955"> */</span></div>
<div class="ln" style="top:76px">4</div>
<div class="cl" style="top:76px"><span style="color:#c586c0">export</span> <span style="color:#c586c0">default</span> <span style="color:#e5dca5">{</span></div>
<div class="ln" style="top:95px">5</div>
<div class="cl" style="top:95px">    <span style="color:#9cdcfe">globalCommon</span><span style="color:#d4d4d4">:</span><span style="color:#e5dca5">{</span></div>
<div class="ln" style="top:114px">6</div>
<div class="cl" style="top:114px">        <span style="color:#9cdcfe">test</span><span style="color:#d4d4d4">:</span> <span style="color:#ce9178">&#x27;</span><span class="cjkt" style="color:#ce9178">这是</span><span style="color:#ce9178">global_common</span><span class="cjkt" style="color:#ce9178">模块的翻译英文的</span><span style="color:#ce9178">&#x27;</span></div>
<div class="ln" style="top:133px">7</div>
<div class="cl" style="top:133px">    <span style="color:#e5dca5">}</span></div>
<div class="ln" style="top:152px">8</div>
<div class="cl" style="top:152px"><span style="color:#e5dca5">}</span></div>
</div>
<div class="ed-shadow"></div>
<div id="find"><div class="sash"></div><span class="abs" style="left:3.500px;top:9px"><svg class="ic" width="16" height="16" viewBox="0 0 16 16"><path fill="#c5c5c5" stroke="#c5c5c5" stroke-width=".35" d="M10.072 8.024L5.715 3.667l.618-.62L11 7.716v.618L6.333 13l-.618-.619 4.357-4.357z"/></svg></span><div class="inp"><span class="abs lbl ui13" style="color:#cccccc;top:0;line-height:25px;left:4.9px;letter-spacing:0px">getLanguage</span></div></div>
</div>
</div>
</body>
</html>
